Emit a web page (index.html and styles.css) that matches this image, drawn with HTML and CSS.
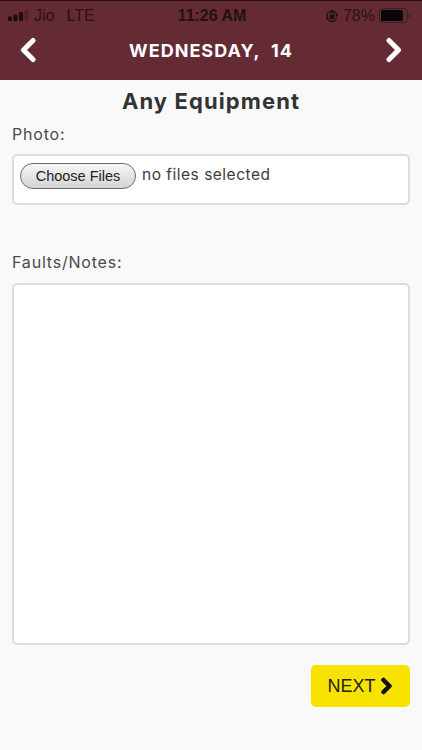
FILE: index.html
```html
<!DOCTYPE html>
<html lang="en">
<head>
<meta charset="utf-8">
<title>Any Equipment</title>
<link rel="stylesheet" href="styles.css">
</head>
<body>
<header class="header">
  <div class="status">
    <div class="status-left">
      <svg class="signal" width="21" height="11" viewBox="0 0 21 11"><rect x="0" y="6.500" width="4" height="4.500" rx="1.200" fill="#1c0c10"/><rect x="5.500" y="4.500" width="4" height="6.500" rx="1.200" fill="#1c0c10"/><rect x="11" y="2" width="4" height="9" rx="1.200" fill="#1c0c10"/><rect x="16.500" y="0" width="4" height="11" rx="1.200" fill="#4f252c"/></svg>
      <span class="carrier">Jio</span>
      <span class="carrier">LTE</span>
    </div>
    <div class="clock">11:26 AM</div>
    <div class="status-right">
      <svg class="lock" width="14" height="14" viewBox="0 0 14 14"><path d="M11.500 9.500A5.200 5.200 0 1 1 12 7" fill="none" stroke="#1c0c10" stroke-width="1.300"/><path d="M10.300 6.200h3l-1.500 2z" fill="#1c0c10"/><rect x="4.500" y="6" width="5" height="4" rx=".6" fill="#1c0c10"/><path d="M5.500 6V5a1.500 1.500 0 0 1 3 0v1" fill="none" stroke="#1c0c10"/></svg>
      <span class="percent">78%</span>
      <svg class="battery" width="32" height="15" viewBox="0 0 32 15"><rect x=".5" y=".5" width="28" height="14" rx="3.500" fill="none" stroke="#3f1c22"/><rect x="2" y="2" width="22" height="11" rx="1.500" fill="#0c0507"/><rect x="30" y="5.500" width="1.500" height="4" rx=".7" fill="#3f1c22"/></svg>
    </div>
  </div>
  <nav class="nav">
    <svg class="chev" width="18" height="26" viewBox="0 0 18 26"><path d="M14 3.500 4.500 13l9.500 9.500" fill="none" stroke="#fff" stroke-width="5" stroke-linecap="round" stroke-linejoin="round"/></svg>
    <div class="day">WEDNESDAY,&nbsp; 14</div>
    <svg class="chev" width="18" height="26" viewBox="0 0 18 26"><path d="M4 3.500 13.500 13 4 22.500" fill="none" stroke="#fff" stroke-width="5" stroke-linecap="round" stroke-linejoin="round"/></svg>
  </nav>
</header>
<main class="content">
  <h1 class="title">Any Equipment</h1>
  <label class="label label-photo">Photo:</label>
  <div class="file-box">
    <span class="file-btn">Choose Files</span>
    <span class="file-text">no files selected</span>
  </div>
  <label class="label label-notes">Faults/Notes:</label>
  <div class="notes"></div>
  <div class="actions">
    <div class="next">NEXT
      <svg width="14" height="18" viewBox="0 0 14 18"><path d="M3.500 3 9.500 9l-6 6" fill="none" stroke="#111" stroke-width="4.500" stroke-linecap="round" stroke-linejoin="round"/></svg>
    </div>
  </div>
</main>
</body>
</html>
```
FILE: styles.css
```css
* { box-sizing: border-box; }
html, body { margin: 0; padding: 0; }
body {
  width: 422px;
  height: 750px;
  overflow: hidden;
  background: #f9f9f9;
  font-family: Inter, "Liberation Sans", sans-serif;
  color: #333;
}
.header {
  height: 80px;
  background: #652b34;
  border-top: 1px solid #2a1015;
}
.status {
  height: 29px;
  display: flex;
  align-items: center;
  justify-content: space-between;
  padding: 0 11px 0 8px;
  color: #2e1218;
  font-family: "Liberation Sans", sans-serif;
  font-size: 16px;
  position: relative;
}
.status-left { display: flex; align-items: center; gap: 5px; }
.carrier { color: #2c1016; margin-right: 7px; }
.clock {
  position: absolute;
  left: 2px;
  right: 0;
  text-align: center;
  font-size: 16px;
  font-weight: 700;
  color: #241014;
}
.status-right { display: flex; align-items: center; gap: 4px; }
.percent { font-size: 16px; color: #2c1016; }
.nav {
  height: 40px;
  display: flex;
  align-items: center;
  justify-content: space-between;
  padding: 0 19px;
}
.day {
  color: #fff;
  font-size: 18px;
  font-weight: 700;
  letter-spacing: 1px;
}
.chev { display: block; }
.content {
  padding: 0 12px;
  display: flex;
  flex-direction: column;
}
.title {
  margin: 9px 0 0;
  height: 25px;
  line-height: 25px;
  text-align: center;
  font-size: 22px;
  font-weight: 700;
  letter-spacing: 1.100px;
  color: #333;
}
.label {
  font-size: 16px;
  line-height: 20px;
  letter-spacing: .8px;
  color: #4a4a4a;
}
.label-photo { margin-top: 10px; }
.file-box {
  margin-top: 10px;
  height: 51px;
  border: 2px solid #dcdcde;
  border-radius: 5px;
  background: #fff;
  display: flex;
  align-items: flex-start;
  padding: 7px 6px;
  gap: 6px;
}
.file-btn {
  width: 116px;
  height: 26px;
  border: 1.500px solid #6b6b6b;
  border-radius: 13px;
  background: linear-gradient(#f6f6f6, #d4d4d4);
  font-family: "Liberation Sans", sans-serif;
  font-size: 14.500px;
  line-height: 24px;
  text-align: center;
  color: #222;
}
.file-text {
  font-size: 15.500px;
  line-height: 24px;
  letter-spacing: .5px;
  color: #3c3c3c;
}
.label-notes { margin-top: 47px; }
.notes {
  margin-top: 11px;
  height: 362px;
  border: 2px solid #dcdcde;
  border-radius: 5px;
  background: #fff;
}
.actions {
  margin-top: 20px;
  display: flex;
  justify-content: flex-end;
}
.next {
  width: 99px;
  height: 42px;
  background: #f7e200;
  border-radius: 5px;
  display: flex;
  align-items: center;
  justify-content: center;
  gap: 4px;
  font-family: "Liberation Sans", sans-serif;
  font-size: 18px;
  color: #222;
}
```
